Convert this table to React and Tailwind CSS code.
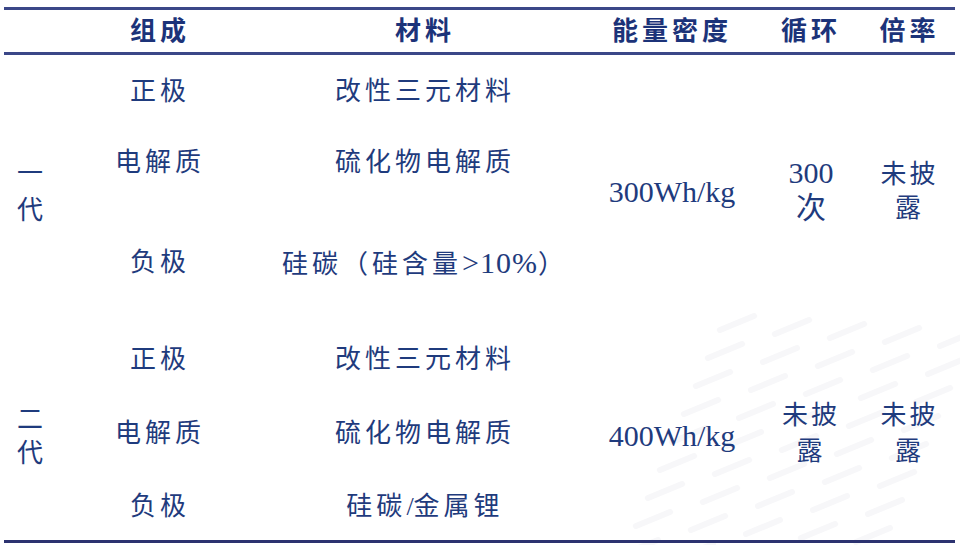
const FONT = { fontFamily: "'Liberation Serif', 'Noto Sans CJK SC', serif" };

const group1 = {
  height: "h-[257px]",
  gen: ["一", "代"],
  parts: ["正极", "电解质", "负极"],
  materials: [
    "改性三元材料",
    "硫化物电解质",
    <>
      硅碳（硅含量<span className="text-[30px] tracking-[1px]">&gt;10%</span>）
    </>,
  ],
  density: "300Wh/kg",
  cycle: ["300", "次"],
  rate: ["未披", "露"],
};

const group2 = {
  height: "h-[228px]",
  gen: ["二", "代"],
  parts: ["正极", "电解质", "负极"],
  materials: [
    "改性三元材料",
    "硫化物电解质",
    <>
      硅碳<span className="tracking-normal">/</span>金属锂
    </>,
  ],
  density: "400Wh/kg",
  cycle: ["未披", "露"],
  rate: ["未披", "露"],
};

function Stack({ lines, className }) {
  return (
    <div className={className}>
      {lines.map((t) => (
        <div key={t}>{t}</div>
      ))}
    </div>
  );
}

function Background() {
  // faint diagonal watermark stripes in the lower right
  const stripes = [];
  for (let i = 0; i < 9; i++) {
    for (let j = 0; j < 5; j++) {
      const x = 720 + j * 55 - i * 12;
      const y = 330 + i * 28 + j * 4;
      stripes.push(
        <line key={`${i}-${j}`} x1={x} y1={y} x2={x + 34} y2={y - 14} stroke="#f7f7f9" strokeWidth="6" strokeLinecap="round" />
      );
    }
  }
  return (
    <svg className="absolute inset-0 pointer-events-none" width="960" height="545">
      {stripes}
    </svg>
  );
}

function Group({ g, second }) {
  return (
    <div className={`flex ${g.height} text-[#1f3b7d]`}>
      <Stack
        lines={g.gen}
        className={`w-[52px] text-center text-[26px] ${second ? "pt-[91px] leading-[34px]" : "pt-[100px] leading-[37px]"}`}
      />
      <div className={`w-[208px] flex flex-col items-center text-[26px] leading-[36px] tracking-[4px] ${second ? "pt-[30px]" : "pt-[19px]"}`}>
        <div>{g.parts[0]}</div>
        <div className={second ? "mt-[38px]" : "mt-[35px]"}>{g.parts[1]}</div>
        <div className={second ? "mt-[37px]" : "mt-[64px]"}>{g.parts[2]}</div>
      </div>
      <div className={`w-[322px] flex flex-col items-center text-[26px] leading-[36px] tracking-[4px] ${second ? "pt-[30px]" : "pt-[19px]"}`}>
        <div>{g.materials[0]}</div>
        <div className={second ? "mt-[38px]" : "mt-[35px]"}>{g.materials[1]}</div>
        <div className={second ? "mt-[37px]" : "mt-[64px]"}>{g.materials[2]}</div>
      </div>
      <div className={`w-[172px] text-center text-[30px] leading-[36px] ${second ? "pt-[106px]" : "pt-[119px]"}`}>
        {g.density}
      </div>
      <Stack
        lines={g.cycle}
        className={`w-[106px] text-center ${second ? "pt-[86px] leading-[36px] text-[26px] tracking-[3px]" : "pt-[100px] leading-[35px] text-[30px]"}`}
      />
      <Stack
        lines={g.rate}
        className={`w-[91px] text-center text-[26px] tracking-[3px] ${second ? "pt-[86px] leading-[36px]" : "pt-[103px] leading-[34px]"}`}
      />
    </div>
  );
}

export default function App() {
  return (
    <div className="relative w-[960px] h-[545px] bg-white overflow-hidden" style={FONT}>
      <Background />
      <div className="relative pt-[7px] pl-[4px]">
        <div className="w-[951px]">
          <div className="border-t-[3px] border-b-[3px] border-[#3b4788] h-[48px] flex items-center font-bold text-[26px] tracking-[4px] text-[#1c3379]">
            <div className="w-[52px]" />
            <div className="w-[208px] text-center">组成</div>
            <div className="w-[322px] text-center">材料</div>
            <div className="w-[172px] text-center">能量密度</div>
            <div className="w-[106px] text-center">循环</div>
            <div className="w-[91px] text-center">倍率</div>
          </div>
          <Group g={group1} />
          <Group g={group2} second />
          <div className="h-[3px] bg-[#2c3270]" />
        </div>
      </div>
    </div>
  );
}
